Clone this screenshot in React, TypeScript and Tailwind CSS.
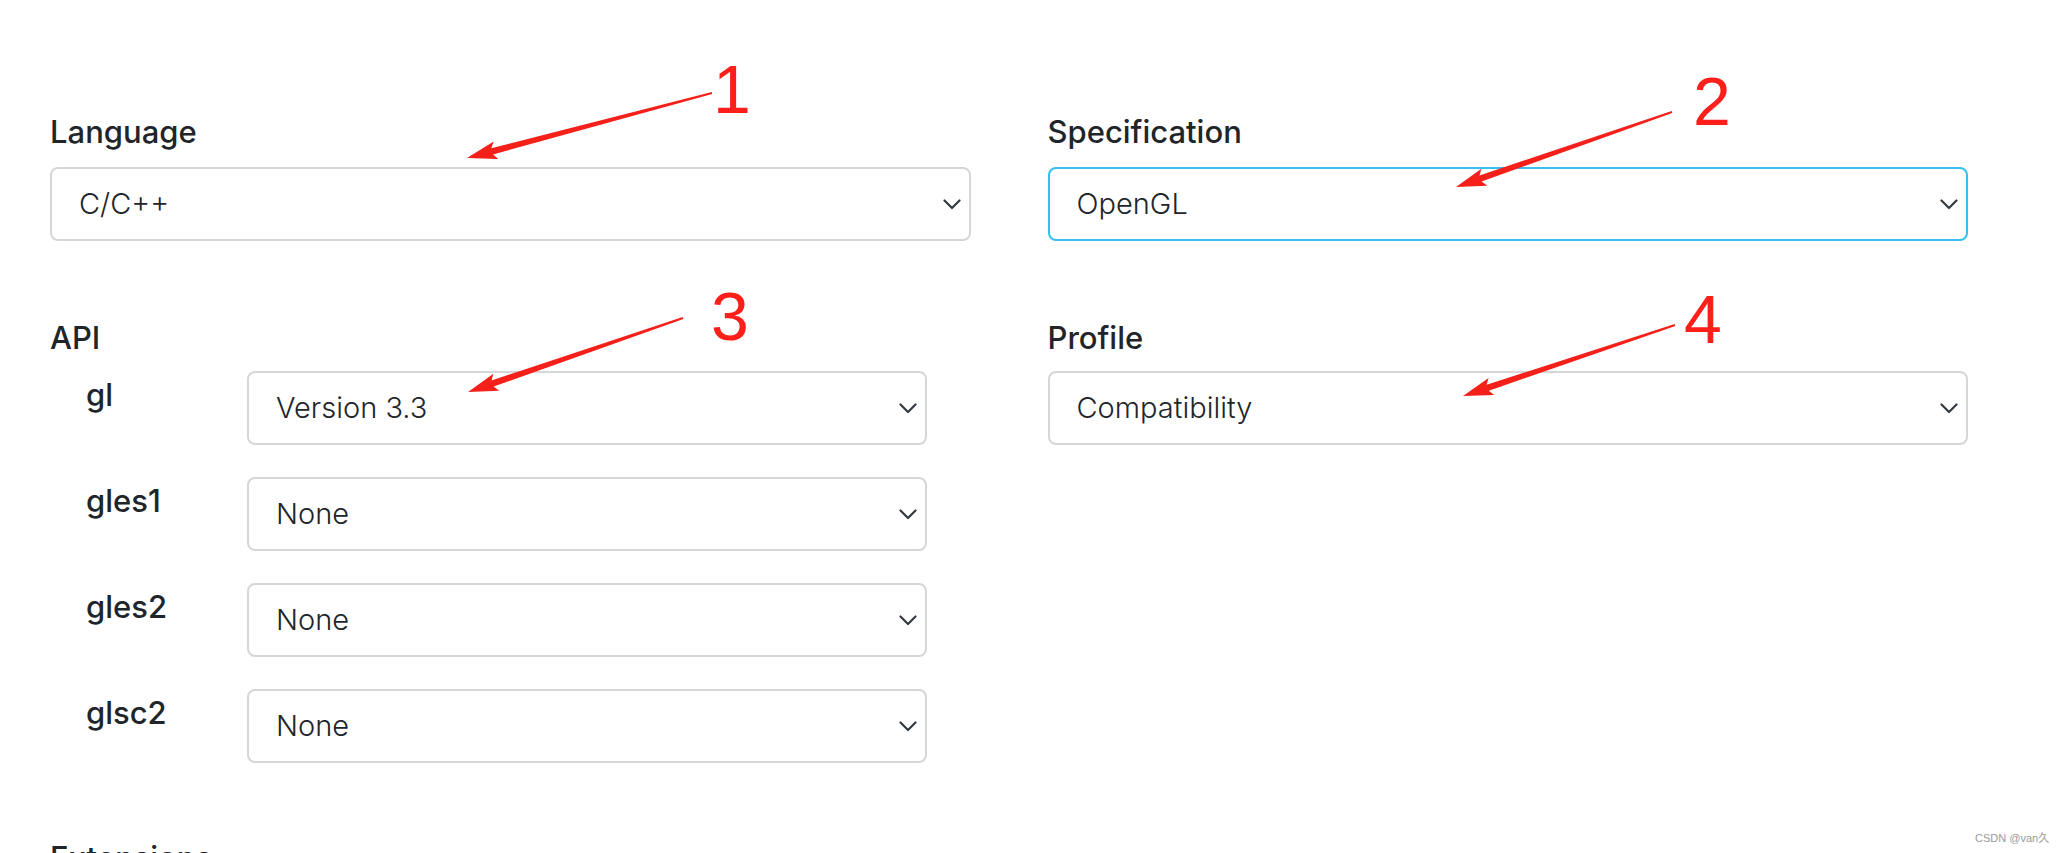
import React from "react";

function Chevron() {
  return (
    <svg width="18" height="11" viewBox="0 0 18 11" fill="none" className="shrink-0">
      <path d="M1.5 1.5 L9 9 L16.5 1.5" stroke="#343a40" strokeWidth="2.2" strokeLinecap="round" strokeLinejoin="round" />
    </svg>
  );
}

function Select({ value, active = false }: { value: string; active?: boolean }) {
  return (
    <div
      className={
        active
          ? "h-[74px] rounded-[8px] border-2 border-[#36c0ef] flex items-center justify-between pl-[27px] pr-[8px] bg-white"
          : "h-[74px] rounded-[8px] border-2 border-[#d6d6d6] flex items-center justify-between pl-[27px] pr-[8px] bg-white"
      }
    >
      <span className="text-[29px] leading-[36px] font-light text-[#212529] oldstyle-nums">{value}</span>
      <Chevron />
    </div>
  );
}

function Label({ children }: { children: React.ReactNode }) {
  return <div className="text-[31px] leading-[36px] font-medium text-[#212529] oldstyle-nums">{children}</div>;
}

function arrowPoints(tx: number, ty: number, px: number, py: number) {
  const dx = px - tx;
  const dy = py - ty;
  const L = Math.hypot(dx, dy);
  const ux = dx / L;
  const uy = dy / L;
  const nx = -uy;
  const ny = ux;
  const headLen = 26;
  const headW = 9;
  const st = 0.9;
  const sh = 3.2;
  const bx = px - ux * headLen;
  const by = py - uy * headLen;
  const cx = bx - ux * 4;
  const cy = by - uy * 4;
  const pts = [
    [tx + nx * st, ty + ny * st],
    [bx + nx * sh, by + ny * sh],
    [cx + nx * headW, cy + ny * headW],
    [px, py],
    [cx - nx * headW, cy - ny * headW],
    [bx - nx * sh, by - ny * sh],
    [tx - nx * st, ty - ny * st],
  ];
  return pts.map((p) => p[0].toFixed(1) + "," + p[1].toFixed(1)).join(" ");
}

const arrows = [
  { t: [712, 93], p: [467, 158] },
  { t: [1672, 112], p: [1456, 187] },
  { t: [683, 318], p: [468, 392] },
  { t: [1675, 325], p: [1463, 396] },
];

const numbers = [
  { n: "1", x: 713, y: 113 },
  { n: "2", x: 1693, y: 125 },
  { n: "3", x: 711, y: 340 },
  { n: "4", x: 1684, y: 343 },
];

export default function App() {
  const apiRows = [
    { name: "gl", value: "Version 3.3" },
    { name: "gles1", value: "None" },
    { name: "gles2", value: "None" },
    { name: "glsc2", value: "None" },
  ];
  return (
    <div
      className="relative w-[2064px] h-[853px] overflow-hidden bg-white"
      style={{ fontFamily: 'Inter, "Noto Sans", sans-serif' }}
    >
      <div className="pl-[50px] pt-[114px] w-[1968px]">
        <div className="grid grid-cols-2 gap-x-[77px] gap-y-[79px]">
          <div className="flex flex-col gap-[17px]">
            <Label>Language</Label>
            <Select value="C/C++" />
          </div>
          <div className="flex flex-col gap-[17px]">
            <Label>Specification</Label>
            <Select value="OpenGL" active />
          </div>
          <div className="flex flex-col gap-[15px]">
            <Label>API</Label>
            <div className="flex flex-col gap-[32px]">
              {apiRows.map((r) => (
                <div key={r.name} className="flex">
                  <div className="w-[197px] pl-[36px] pt-[6px]">
                    <Label>{r.name}</Label>
                  </div>
                  <div className="w-[680px]">
                    <Select value={r.value} />
                  </div>
                </div>
              ))}
            </div>
          </div>
          <div className="flex flex-col gap-[15px]">
            <Label>Profile</Label>
            <Select value="Compatibility" />
          </div>
        </div>
        <div className="mt-[77px]">
          <Label>Extensions</Label>
        </div>
      </div>

      <svg className="absolute left-0 top-0 pointer-events-none" width="2064" height="853">
        {arrows.map((a, i) => (
          <polygon key={i} points={arrowPoints(a.t[0], a.t[1], a.p[0], a.p[1])} fill="#f5201a" />
        ))}
        {numbers.map((n) => (
          <text
            key={n.n}
            x={n.x}
            y={n.y}
            fill="#ff1f1a"
            fontSize="68"
            style={{ fontFamily: '"Liberation Sans", Arial, sans-serif' }}
          >
            {n.n}
          </text>
        ))}
      </svg>

      <div
        className="absolute left-[1975px] top-[831px] text-[11px] leading-[14px] text-[#9a9a9a] whitespace-nowrap"
        style={{ fontFamily: '"Liberation Sans", "Noto Sans CJK SC", sans-serif' }}
      >
        CSDN @van久
      </div>
    </div>
  );
}
